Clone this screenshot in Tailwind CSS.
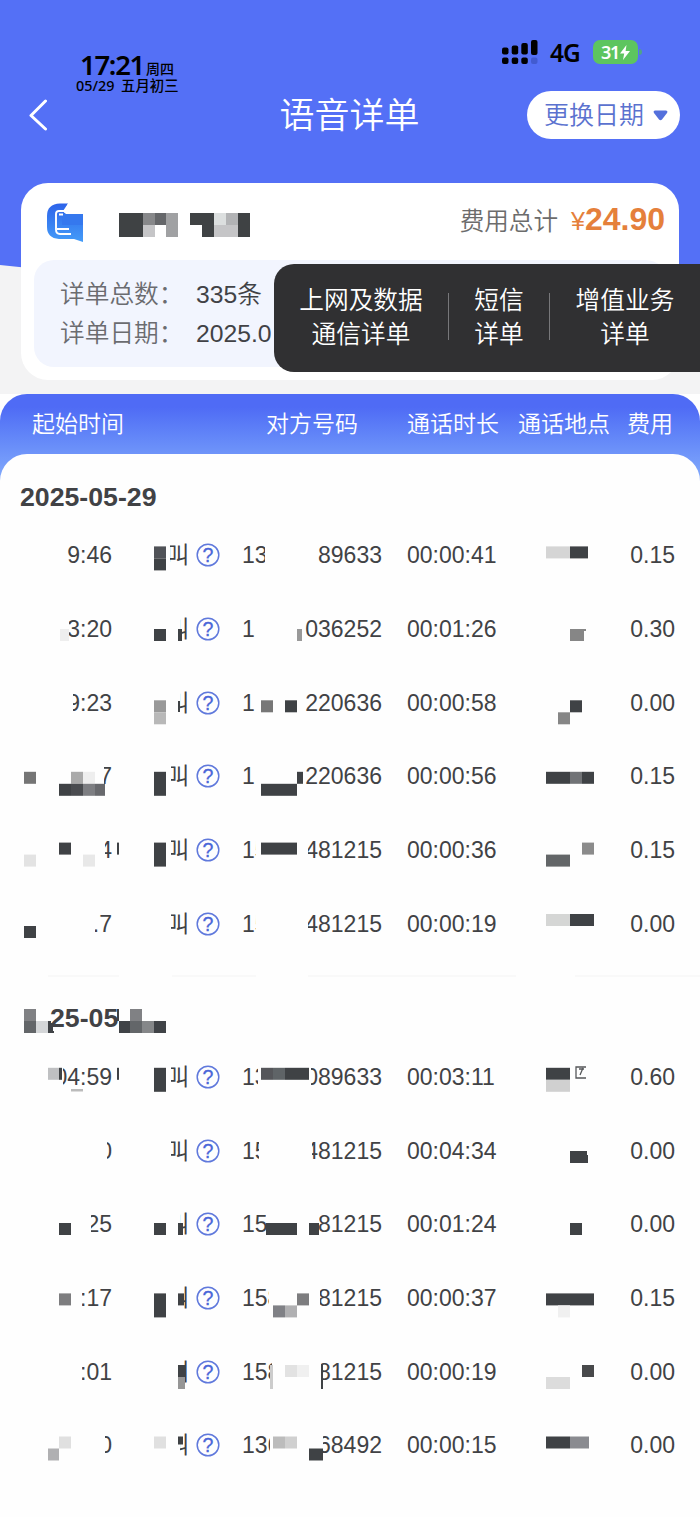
<!DOCTYPE html>
<html lang="zh-CN">
<head>
    <meta charset="UTF-8">
    <meta name="viewport" content="width=device-width, initial-scale=1.0">
    <script src="https://cdn.jsdelivr.net/npm/@tailwindcss/browser@4"></script>
    <title>语音详单</title>
</head>
<body class="bg-white">
    <div class="w-[700px] h-[1517px] overflow-hidden bg-[#fefefe] font-['Liberation_Sans','Noto_Sans_CJK_SC',sans-serif]">
        <div class="relative h-[394px] bg-[#f3f3f4]">
            <svg class="absolute left-0 top-0" width="700" height="300" viewBox="0 0 700 300">
                <path d="M0 0H700V265Q350 305 0 265Z" fill="#5470f6"/>
            </svg>

            <!-- Status bar -->
            <div class="relative flex justify-between h-[91px] pl-[76px] pr-[58px] font-['Noto_Sans','Noto_Sans_CJK_SC',sans-serif]">
                <div class="pt-[52px] text-black">
                    <div class="flex items-end h-[26px] pl-1 leading-[26px]">
                        <span class="w-[65px] text-[27.500px] font-semibold tracking-[-1.3px]">17:21</span>
                        <span class="pl-px text-[14px] leading-[18px] font-medium">周四</span>
                    </div>
                    <div class="flex gap-[6px] text-[14.4px] leading-[15px] font-medium whitespace-nowrap">
                        <span class="w-[39px]">05/29</span><span>五月初三</span>
                    </div>
                </div>
                <div class="flex items-start pt-10">
                    <svg width="36" height="25" viewBox="0 0 36 25">
                        <rect x="0" y="7.5" width="6.500" height="7" rx="2"/>
                        <rect x="9.7" y="5.5" width="6.500" height="9" rx="2"/>
                        <rect x="19.3" y="3" width="6.500" height="11.5" rx="2"/>
                        <rect x="29" y="0" width="6.500" height="15" rx="2"/>
                        <rect x="0" y="17.500" width="6.500" height="6.500" rx="2"/>
                        <rect x="9.7" y="17.500" width="6.500" height="6.500" rx="2"/>
                        <rect x="19.3" y="17.500" width="6.500" height="6.500" rx="2"/>
                        <rect x="29" y="17.500" width="6.500" height="6.500" rx="2" fill="#425bd0"/>
                    </svg>
                    <span class="ml-[12px] w-[43px] text-[24.5px] leading-[26px] font-semibold tracking-[-1px]">4G</span>
                    <div class="flex items-center justify-center gap-[1px] w-[45px] h-6 rounded-[7px] bg-[#5dc55f] text-white">
                        <span class="text-[18px] leading-6 font-semibold tracking-[-1.2px]">31</span>
                        <svg width="10" height="15" viewBox="0 0 10 15"><path d="M6.5 0L0 8.5H4.2L3 15L10 6H5.6Z" fill="#fff"/></svg>
                    </div>
                    <div class="mt-[9px] ml-px w-[3px] h-[6px] rounded-r-full bg-[#4fa38a]"></div>
                </div>
            </div>

            <!-- Title -->
            <div class="relative grid grid-cols-[1fr_auto_1fr] items-center h-12 pl-[28px] pr-5">
                <svg width="20" height="32" viewBox="0 0 20 32" fill="none" stroke="#fff" stroke-width="3" stroke-linecap="round" stroke-linejoin="round"><path d="M17.5 2L3 16.5L17.5 30"/></svg>
                <h1 class="pt-px mr-[9px] text-[35px] leading-none font-[350] text-white">语音详单</h1>
                <button class="flex items-center justify-self-end gap-[9px] w-[153px] h-12 pl-[17px] rounded-full bg-white text-[25px] font-[350] text-[#5b72cf]">
                    <span class="pt-px">更换日期</span>
                    <svg width="15" height="11" viewBox="0 0 15 11"><path d="M2 .5H13Q15.200 1 14 3L9 9.500Q7.500 11 6 9.500L1 3Q-.2 1 2 .5Z" fill="#5470dc"/></svg>
                </button>
            </div>

            <!-- Summary card -->
            <div class="relative mt-11 mx-[21px] h-[197px] px-[13px] rounded-[27px] bg-white">
                <div class="flex items-center h-[77px] pl-[13px] pr-[1px]">
                    <svg class="mt-px" width="36" height="39" viewBox="0 0 36 39">
                        <defs>
                            <linearGradient id="logo" x1="0" y1="0" x2="0" y2="1">
                                <stop offset="0" stop-color="#2d63ea"/>
                                <stop offset="1" stop-color="#449cf8"/>
                            </linearGradient>
                        </defs>
                        <path d="M13 .5H21L17 9.500L20 11H36V39L27 36H12Q0 35 0 24V13Q0 1 13 .5Z" fill="url(#logo)"/>
                        <path d="M15 10.500H36V22H15Z" fill="#3578ee"/>
                        <path d="M17 8H12Q9 8 9 11V26.500Q9 31 13 31H24M10 26H22M12 11.500H16" fill="none" stroke="#fff" stroke-width="1.900"/>
                        <path d="M21 .5L16 8L19 11H36V0H21Z" fill="#fff"/>
                    </svg>
                    <svg class="ml-[36px] mt-[7px]" width="131" height="24" viewBox="0 0 131 24" shape-rendering="crispEdges">
                        <path d="M0 0H24V24H0ZM71 0H95V24H83V12H71ZM119 0H131V24H119Z" fill="#3f4244"/>
                        <path d="M24 0H36V12H24Z" fill="#87888a"/>
                        <path d="M36 0H47V12H36Z" fill="#65676a"/>
                        <path d="M47 0H59V24H47Z" fill="#a0a1a3"/>
                        <path d="M24 12H36V24H24ZM95 12H119V24H95Z" fill="#c5c5c7"/>
                        <path d="M95 0H107V12H95Z" fill="#dcdfdf"/>
                        <path d="M107 0H119V12H107Z" fill="#b2b3b5"/>
                    </svg>
                    <div class="flex items-baseline ml-auto mb-[5px] text-[#e5803b]">
                        <span class="text-[24.6px] font-[350] text-[#6c6c6c]">费用总计</span>
                        <span class="ml-[13px] text-[25px]">¥</span>
                        <span class="text-[32px] font-bold">24.90</span>
                    </div>
                </div>
                <div class="h-[107px] pt-[14.500px] pl-[26px] rounded-[20px] bg-[#f2f5fe] text-[24.700px] leading-[39px] text-[#414246]">
                    <div class="flex"><span class="w-[136px] font-[350] text-[#6b6c70]">详单总数：</span><span class="font-[350]">335条</span></div>
                    <div class="flex"><span class="w-[136px] font-[350] text-[#6b6c70]">详单日期：</span><span>2025.0</span></div>
                </div>
            </div>

            <!-- Other bill types popup -->
            <div class="absolute left-[274px] right-0 top-[264px] flex h-[107.5px] pt-5 rounded-l-[20px] bg-[#303032] text-center text-[24.700px] leading-[34px] font-[350] text-white">
                <div class="w-[174px]">上网及数据<br>通信详单</div>
                <div class="mt-[9px] w-px h-[47px] bg-[#77777a]"></div>
                <div class="w-[100px]">短信<br>详单</div>
                <div class="mt-[9px] w-px h-[47px] bg-[#77777a]"></div>
                <div class="w-[150px]">增值业务<br>详单</div>
            </div>
        </div>

        <!-- Call table -->
        <div class="rounded-t-[27px] bg-linear-to-b from-[#4f6bf5] from-15% to-[#84abfb] to-100% h-[86.5px]">
            <div class="grid grid-cols-[234px_141px_111px_109px_auto] h-[59px] pl-[32px] text-[23px] leading-[60px] font-[350] text-white">
                <span>起始时间</span>
                <span>对方号码</span>
                <span>通话时长</span>
                <span>通话地点</span>
                <span>费用</span>
            </div>
        </div>
        <div class="relative -mt-[27px] rounded-t-[27px] bg-[#fefefe] text-[#414245]">
            <h2 class="h-[65px] pt-[25px] pl-[20px] text-[26.700px] leading-[36px] font-bold">2025-05-29</h2>
            <div id="day-one"></div>
            <div class="flex h-[2px] mt-[14.500px] pl-[48px]">
                <div class="w-[71px] bg-[#f9f9f9]"></div>
                <div class="w-[84px] ml-[53px] bg-[#f9f9f9]"></div>
                <div class="w-[208px] ml-[52px] bg-[#f9f9f9]"></div>
                <div class="w-[125px] ml-[59px] bg-[#f9f9f9]"></div>
            </div>
            <div class="relative h-[63px]">
                <h2 class="pt-[23px] pl-[50px] text-[26.700px] leading-[36px] font-bold">25-05</h2>
                <svg class="absolute left-0 top-0" width="200" height="62" viewBox="0 0 200 62" shape-rendering="crispEdges">
                    <path d="M24 32H36V44H24ZM130 32H142V44H130Z" fill="#808184"/>
                    <path d="M24 44H36V56H24ZM130 44H142V56H130Z" fill="#636669"/>
                    <path d="M36 44H48V56H36Z" fill="#d4d6d8"/>
                    <path d="M142 44H154V56H142Z" fill="#858789"/>
                    <path d="M48 44H51L54 56H48ZM119 44H130V56H119ZM154 44H166V56H154ZM117 32H119V44H117Z" fill="#404347"/>
                </svg>
            </div>
            <div id="day-two"></div>
        </div>
    </div>

    <script>
    const D = '#3f4245';

    // call: cut x of the 叫 label, pre/post: [visible digits, cut x], blocks: [x, y, w, h, color]
    const dayOne = [
        { time: ['9:46', 66], call: 170, pre: ['13', 265], post: ['89633', 317], len: '00:00:41', fee: '0.15',
          blocks: [[154, 27.4, 12, 12, '#505257'], [154, 39.4, 12, 12, D], [546, 27.4, 24, 12, '#d5d5d5'], [570, 27.4, 18, 12, D]] },
        { time: ['3:20', 69], call: 180, pre: ['1', 256], post: ['036252', 304], len: '00:01:26', fee: '0.30',
          blocks: [[60, 37, 9, 12, '#eeeeee'], [154, 37, 12, 12, D], [178, 37, 4, 12, D], [297, 37, 5, 12, '#999999'], [570, 37, 14, 12, '#868686'], [582, 37, 4, 2, '#868686']] },
        { time: ['9:23', 73], call: 180, pre: ['1', 256], post: ['220636', 304], len: '00:00:58', fee: '0.00',
          blocks: [[154, 34.3, 12, 12, '#999999'], [154, 46.3, 12, 12, '#b8b8b8'], [178, 35, 2, 11, D], [261, 34.3, 12, 12, '#777777'], [285, 34.3, 12, 12, D], [570, 34.3, 12, 12, D], [558, 46.3, 12, 12, '#868686']] },
        { time: ['7', 104], call: 171, pre: ['1', 256], post: ['220636', 304], len: '00:00:56', fee: '0.15',
          blocks: [[24, 31.8, 12, 12, '#757575'], [71, 31.8, 12, 12, '#aaaaaa'], [83, 31.8, 12, 12, '#eeeeee'], [59, 43.8, 12, 12, D], [71, 43.8, 12, 12, '#4a4c50'], [83, 43.8, 12, 12, '#7d7e82'], [95, 43.8, 10, 12, '#68696d'], [154, 31.8, 12, 24, D], [261, 43.8, 36, 12, D], [297, 31.8, 6, 12, D], [546, 31.8, 24, 12, D], [570, 31.8, 12, 12, '#717376'], [582, 31.8, 12, 12, D]] },
        { time: ['4', 105], call: 171, pre: ['15', 256], post: ['481215', 308], len: '00:00:36', fee: '0.15',
          blocks: [[24, 41.6, 12, 12, '#e3e3e3'], [59, 29.6, 12, 12, D], [83, 41.6, 12, 12, '#e8e8e8'], [117, 29.6, 2, 12, D], [154, 29.6, 12, 24, D], [261, 29.6, 36, 12, D], [582, 29.6, 12, 12, '#8b8b8b'], [546, 41.6, 24, 12, '#636668']] },
        { time: ['.7', 95], call: 171, pre: ['15', 256], post: ['481215', 308], len: '00:00:19', fee: '0.00',
          blocks: [[24, 39, 12, 12, D], [546, 27, 24, 12, '#d5d6d5'], [570, 27, 24, 12, D]] }
    ];

    const dayTwo = [
        { time: ['04:59', 63], call: 171, pre: ['13', 258], post: ['089633', 311], len: '00:03:11', fee: '0.60',
          blocks: [[48, 27.8, 11, 12, '#bfc0c2'], [59, 27.8, 3, 12, D], [71, 49, 12, 2.5, '#bbbbbb'], [117, 27.8, 2, 12, D], [154, 27.8, 12, 24, D], [261, 27.8, 12, 12, '#55565a'], [273, 27.8, 12, 12, '#5f6467'], [285, 27.8, 24, 12, D], [546, 27.8, 24, 12, D], [546, 39.8, 24, 12, '#d0d0d0']],
          mark: true },
        { time: ['0', 107], call: 171, pre: ['15', 259], post: ['481215', 312], len: '00:04:34', fee: '0.00',
          blocks: [[570, 37, 17, 12, D], [586, 41, 2, 8, D]] },
        { time: ['25', 91], call: 180, pre: ['15', 266], post: ['81215', 319], len: '00:01:24', fee: '0.00',
          blocks: [[59, 35, 12, 12, D], [154, 35, 12, 12, D], [178, 35, 5, 12, D], [266, 35, 31, 12, D], [309, 35, 10, 12, D], [570, 35, 12, 12, D]] },
        { time: [':17', 82], call: 182, pre: ['158', 269], post: ['81215', 320], len: '00:00:37', fee: '0.15',
          blocks: [[59, 32.4, 12, 12, '#7d7d7f'], [154, 32.4, 12, 24, D], [178, 32.4, 6, 12, D], [273, 44.4, 12, 12, '#808186'], [285, 44.4, 12, 12, '#b0b0b2'], [297, 32.4, 12, 12, '#7d7d7f'], [546, 32.4, 48, 12, D], [558, 44.4, 12, 12, '#f0f0f0']] },
        { time: [':01', 82], call: 184, pre: ['158', 272], post: ['81215', 321], len: '00:00:19', fee: '0.00',
          blocks: [[178, 30, 8, 12, D], [178, 42, 7, 12, '#969696'], [270, 30, 3, 24, '#cccccc'], [285, 30, 12, 12, '#e2e2e2'], [297, 30, 12, 12, '#f0f0f0'], [321, 30, 2, 24, D], [582, 30, 12, 12, '#48494b'], [546, 42, 24, 12, '#dcdcdc']] },
        { time: ['0', 105], call: 180, pre: ['136', 270], post: ['68492', 323], len: '00:00:15', fee: '0.00',
          blocks: [[59, 27.5, 12, 12, '#e0e0e0'], [48, 39.5, 11, 12, '#b0b0b2'], [154, 27.5, 12, 12, '#e0e0e0'], [178, 27.5, 5, 8, D], [273, 27.5, 12, 12, '#bcbcbc'], [285, 27.5, 12, 12, '#d0d0d0'], [309, 39.5, 14, 12, D], [546, 27.5, 24, 12, D], [570, 27.5, 19, 12, '#8a8b90']] }
    ];

    function renderRow(row) {
        return `
            <div class="relative grid grid-cols-[112px_77px_53px_140px_25px_139px_129px] items-center h-[73.7px] text-[23px] leading-[30px]">
                <div class="flex justify-end overflow-hidden justify-self-end" style="width:${112.5 - row.time[1]}px"><span>${row.time[0]}</span></div>
                <div class="flex justify-end overflow-hidden justify-self-end" style="width:${189 - row.call}px"><span>叫</span></div>
                <svg class="ml-[6.5px]" width="24" height="24" viewBox="0 0 24 24">
                    <circle cx="12" cy="12" r="10.8" fill="none" stroke="#6079dc" stroke-width="1.5"/>
                    <text x="12" y="19" text-anchor="middle" font-size="19.5" fill="#4a66d8" stroke="#4a66d8" stroke-width=".3">?</text>
                </svg>
                <div class="flex justify-between">
                    <div class="overflow-hidden" style="width:${row.pre[1] - 242}px"><span>${row.pre[0]}</span></div>
                    <div class="flex justify-end overflow-hidden" style="width:${382 - row.post[1]}px"><span>${row.post[0]}</span></div>
                </div>
                <div></div>
                <div>${row.len}</div>
                <div class="text-right">${row.fee}</div>
                <svg class="absolute left-0 top-0" width="700" height="73" viewBox="0 0 700 73">
                    ${row.blocks.map(b => `<rect x="${b[0]}" y="${b[1]}" width="${b[2]}" height="${b[3]}" fill="${b[4]}"/>`).join('')}
                    ${row.mark ? '<path d="M586 27H576V38H586M583 28L580 35M579 29H584" fill="none" stroke="#55575a" stroke-width="1.3"/>' : ''}
                </svg>
            </div>`;
    }

    document.getElementById('day-one').innerHTML = dayOne.map(renderRow).join('');
    document.getElementById('day-two').innerHTML = dayTwo.map(renderRow).join('');
    </script>
</body>
</html>
